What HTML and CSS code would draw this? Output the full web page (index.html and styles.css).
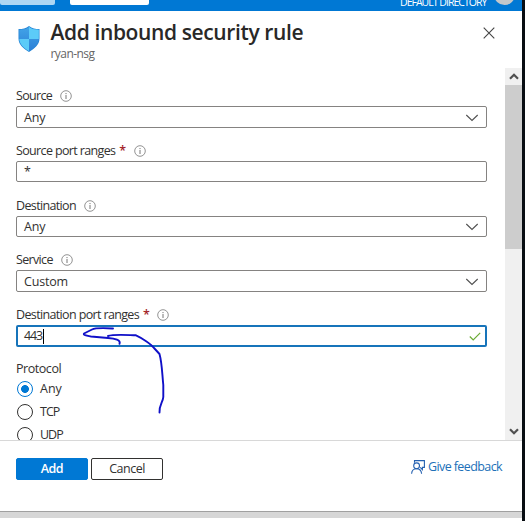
FILE: index.html
```html
<!DOCTYPE html>
<html lang="en">
<head>
<meta charset="utf-8">
<title>Add inbound security rule</title>
<link rel="stylesheet" href="styles.css">
</head>
<body>
<svg class="defs" width="0" height="0" aria-hidden="true">
  <symbol id="info" viewBox="0 0 12 12"><circle cx="6" cy="6" r="5.300" fill="none" stroke="#777" stroke-width=".8"/><path d="M6 5v4M6 3v1.100" stroke="#666" stroke-width=".9"/></symbol>
  <symbol id="chevron" viewBox="0 0 14 8"><path d="M1.300 1 7 6.500 12.700 1" fill="none" stroke="#505050" stroke-width="1.100"/></symbol>
</svg>
<div class="window">
  <div class="topbar">
    <div class="tab pale"></div>
    <div class="tab search"></div>
    <span class="directory">DEFAULT DIRECTORY</span>
    <div class="avatar"></div>
  </div>
  <header class="header">
    <svg class="shield" width="22" height="26" viewBox="0 0 22 26">
      <defs><clipPath id="sh"><path d="M11 0C8 2.600 4.500 3 .5 3v9.500C.5 19 6 23 11 26c5-3 10.500-7 10.500-13.500V3C17.500 3 14 2.600 11 0z"/></clipPath>
      <linearGradient id="dk" x2="0" y2="1"><stop stop-color="#42a4e8"/><stop offset="1" stop-color="#2b7fd6"/></linearGradient></defs>
      <g clip-path="url(#sh)"><path fill="#2585d6" d="M0 0h22v26H0z"/></g>
      <g clip-path="url(#sh)" transform="translate(.8 .9) scale(.93)"><path fill="url(#dk)" d="M0 0h22v26H0z"/><path fill="#5ccbf8" d="M11 0h11v13H11zM0 13h11v13H0z"/></g>
    </svg>
    <div class="titles">
      <h1>Add inbound security rule</h1>
      <div class="sub">ryan-nsg</div>
    </div>
    <svg class="close" width="12" height="12" viewBox="0 0 12 12"><path d="M.7.7l10.600 10.600M11.300.7.7 11.300" stroke="#444" stroke-width="1.100"/></svg>
  </header>
  <main class="body">
    <form class="form">
      <div class="field"><div class="label l1"><span>Source</span><svg class="info"><use href="#info"/></svg></div>
        <div class="box"><span>Any</span><svg class="chev"><use href="#chevron"/></svg></div></div>
      <div class="field"><div class="label l2"><span>Source port ranges</span><b>*</b><svg class="info"><use href="#info"/></svg></div>
        <div class="box low"><span class="star">*</span></div></div>
      <div class="field short"><div class="label l3"><span>Destination</span><svg class="info"><use href="#info"/></svg></div>
        <div class="box low"><span>Any</span><svg class="chev"><use href="#chevron"/></svg></div></div>
      <div class="field"><div class="label l4"><span>Service</span><svg class="info"><use href="#info"/></svg></div>
        <div class="box"><span>Custom</span><svg class="chev"><use href="#chevron"/></svg></div></div>
      <div class="field"><div class="label l5"><span>Destination port ranges</span><b>*</b><svg class="info"><use href="#info"/></svg></div>
        <div class="box focus"><span class="v-num">443</span><i class="caret"></i><svg class="check" width="12" height="9" viewBox="0 0 12 9"><path d="M.8 4.500 4.200 7.900 11.200.9" fill="none" stroke="#6bab35" stroke-width="1.200"/></svg></div></div>
      <div class="protocol">Protocol</div>
      <div class="radio on"><i></i><span>Any</span></div>
      <div class="radio"><i></i><span class="tcp">TCP</span></div>
      <div class="radio"><i></i><span class="tcp">UDP</span></div>
    </form>
    <div class="scroll">
      <div class="arrow"><svg width="10" height="7" viewBox="0 0 10 7"><path d="M1 5.800 5 1.800 9 5.800" fill="none" stroke="#505050" stroke-width="2.200"/></svg></div>
      <div class="thumb"></div>
      <div class="arrow down"><svg width="10" height="7" viewBox="0 0 10 7"><path d="M1 1.200 5 5.200 9 1.200" fill="none" stroke="#505050" stroke-width="2.200"/></svg></div>
    </div>
  </main>
  <footer class="footer">
    <div class="btn primary">Add</div>
    <div class="btn">Cancel</div>
    <div class="feedback"><svg width="14" height="14" viewBox="0 0 14 14" fill="none" stroke="#2460b0" stroke-width="1.100"><path d="M3.500 2.800V.6h9.900v6.800h-2v2.200L9.200 7.400"/><circle cx="5.600" cy="5.800" r="2.900"/><path d="M.6 13.800c.2-3 2.200-5 5-5s4.700 2 5 5"/></svg><span>Give feedback</span></div>
  </footer>
  <div class="bottom"></div>
</div>
<svg class="ink" width="90" height="96" viewBox="78 322 90 96"><path d="M113 328.500C104 328 96 327.500 92 329.500L84 333.500C83 335 86 335.500 91 336.500L108 338C115 338.500 121 340 119.500 343.800M108 336C114 334 126 335 136 335.300C142 338 151 344 154 348L159.500 354C162 363 162 372 163.300 385V397C163 402 159 405 159.500 412.500" fill="none" stroke="#1010c8" stroke-width="1.900" stroke-linecap="round" stroke-linejoin="round"/></svg>
</body>
</html>
```
FILE: styles.css
```css
* { box-sizing: border-box; }
body { margin: 0; width: 525px; height: 521px; overflow: hidden; background: #080d12; font: 12.5px/16px "Open Sans", "Noto Sans", sans-serif; color: #323130; }
svg { display: block; flex: none; }
.defs { position: absolute; }
span { white-space: nowrap; }
.window { width: 522px; height: 521px; background: #fff; display: flex; flex-direction: column; overflow: hidden; }
.topbar { height: 11px; flex: none; background: #0078d4; display: flex; overflow: hidden; }
.tab { height: 5px; border-radius: 0 0 2px 2px; }
.pale { width: 55px; background: #add6f3; }
.search { width: 79px; margin-left: 15px; background: #fff; }
.directory { width: 94px; margin-left: 251px; margin-top: -6px; color: #fff; font-size: 10.5px; letter-spacing: -.98px; }
.avatar { width: 21px; height: 21px; flex: none; border-radius: 50%; background: #c3c7ca; margin-top: -16px; }
.header { height: 57px; flex: none; display: flex; padding-left: 18px; }
.shield { margin-top: 15px; }
.titles { margin-left: 10.5px; width: 430.5px; }
h1 { margin: 7px 0 0; font-size: 21px; line-height: 28px; font-weight: 600; letter-spacing: -.38px; white-space: nowrap; color: #292827; }
.sub { line-height: 15px; font-size: 12px; letter-spacing: -.55px; color: #666; }
.close { margin: 16px 0 0 2px; }
.body { height: 372px; flex: none; display: flex; overflow: hidden; }
.form { width: 505px; padding: 16px 18px 0 16px; }
.field { height: 55px; }
.field.short { height: 54px; }
.label { height: 22px; padding-top: 1px; display: flex; align-items: center; letter-spacing: -.64px; }
.label b { color: #a4262c; font-weight: 600; margin-left: 4px; }
.info { width: 12px; height: 12px; margin-left: 8px; }
.l1, .l4 { letter-spacing: -.66px; }
.box { width: 471px; height: 22px; border: 1px solid #858381; border-radius: 2px; padding: 1px 7px 0; display: flex; align-items: center; letter-spacing: -.2px; }
.chev { width: 14px; height: 8px; margin-left: auto; }
.low { height: 21px; }
.focus { border: 2px solid #1774ba; padding: 0 4px 0 6px; }
.v-num { letter-spacing: -1.2px; }
.caret { width: 1px; height: 15px; background: #000; margin-left: 1px; }
.check { margin-left: auto; }
.protocol { height: 16px; margin-top: 3px; letter-spacing: -.45px; }
.radio { height: 23px; display: flex; align-items: center; }
.radio i { width: 16px; height: 16px; border: 1px solid #323130; border-radius: 50%; margin: 0 7px 0 1px; }
.radio span { padding-top: 1px; }
.radio.on i { border-color: #0078d4; background: radial-gradient(circle, #0078d4 0 3.6px, transparent 4.2px); }
.radio .tcp { letter-spacing: -1px; }
.scroll { width: 17px; background: #f0f0f0; display: flex; flex-direction: column; }
.arrow { height: 17px; display: flex; align-items: center; justify-content: center; }
.thumb { height: 164px; background: #cdcdcd; }
.down { margin-top: auto; }
.footer { height: 71px; flex: none; border-top: 1px solid #d8d8d8; display: flex; padding: 17px 20px 0 16px; }
.btn { width: 72px; height: 22px; margin-right: 3px; border: 1px solid #323130; border-radius: 2px; line-height: 20px; text-align: center; letter-spacing: -.5px; }
.primary { background: #0078d4; border-color: #0078d4; color: #fff; font-weight: 600; }
.feedback { margin-left: auto; display: flex; height: 16px; color: #2070b8; letter-spacing: -.6px; }
.feedback span { margin: 1px 0 0 3px; }
.feedback svg { margin-top: 2px; }
.bottom { height: 7px; flex: none; background: #d7d7d7; border-top: 1px solid #a0a0a0; }
.ink { position: absolute; left: 78px; top: 322px; }
```
